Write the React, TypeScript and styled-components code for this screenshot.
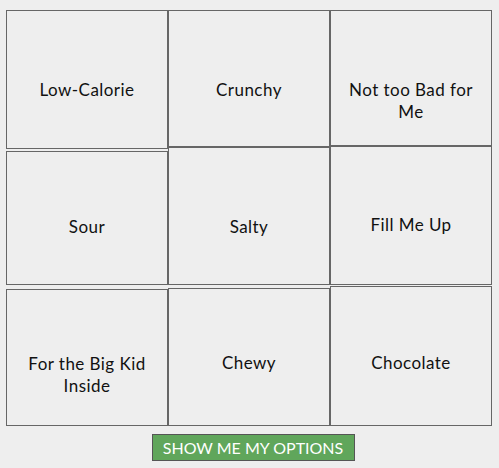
import React from "react";
import styled, { createGlobalStyle } from "styled-components";

const Global = createGlobalStyle`
  html, body { margin: 0; padding: 0; background: #eeeeee; }
  body { font-family: Lato, "Noto Sans", sans-serif; }
`;

const Page = styled.div`
  padding: 10px 7px 0 6px;
  display: flex;
  flex-direction: column;
  align-items: flex-start;
`;

const Board = styled.div`
  display: flex;
  width: 486px;
`;

const Column = styled.div`
  display: flex;
  flex-direction: column;
  width: 162px;
`;

const Cell = styled.div<{ $h: number; $mt: number; $pt: number }>`
  box-sizing: border-box;
  height: ${(p) => p.$h}px;
  margin-top: ${(p) => p.$mt}px;
  padding: ${(p) => p.$pt}px 10px 0;
  border: 1px solid #666666;
  background: #eeeeee;
  color: #111111;
  font-size: 17px;
  line-height: 22px;
  text-align: center;
  letter-spacing: 0.45px;
`;

const Footer = styled.div`
  display: flex;
  width: 486px;
  justify-content: center;
  padding-left: 8px;
  margin-top: 8px;
  box-sizing: border-box;
`;

const Button = styled.button`
  box-sizing: border-box;
  width: 203px;
  height: 27px;
  padding: 0;
  border: 1px solid #555555;
  background: #60a65b;
  color: #ffffff;
  font-family: Lato, "Noto Sans", sans-serif;
  font-size: 16px;
  letter-spacing: 0;
  line-height: 25px;
  text-transform: uppercase;
  cursor: pointer;
`;

type Item = { label: string; h: number; mt: number; pt: number };

const columns: Item[][] = [
  [
    { label: "Low-Calorie", h: 139, mt: 0, pt: 68 },
    { label: "Sour", h: 134, mt: 2, pt: 64 },
    { label: "For the Big Kid Inside", h: 137, mt: 4, pt: 63 },
  ],
  [
    { label: "Crunchy", h: 137, mt: 0, pt: 68 },
    { label: "Salty", h: 138, mt: 0, pt: 68 },
    { label: "Chewy", h: 138, mt: 3, pt: 63 },
  ],
  [
    { label: "Not too Bad for Me", h: 136, mt: 0, pt: 68 },
    { label: "Fill Me Up", h: 139, mt: 0, pt: 67 },
    { label: "Chocolate", h: 140, mt: 1, pt: 65 },
  ],
];

export default function App() {
  return (
    <>
      <Global />
      <Page>
        <Board>
          {columns.map((col, i) => (
            <Column key={i}>
              {col.map((it) => (
                <Cell key={it.label} $h={it.h} $mt={it.mt} $pt={it.pt}>
                  {it.label}
                </Cell>
              ))}
            </Column>
          ))}
        </Board>
        <Footer>
          <Button>Show me my options</Button>
        </Footer>
      </Page>
    </>
  );
}
